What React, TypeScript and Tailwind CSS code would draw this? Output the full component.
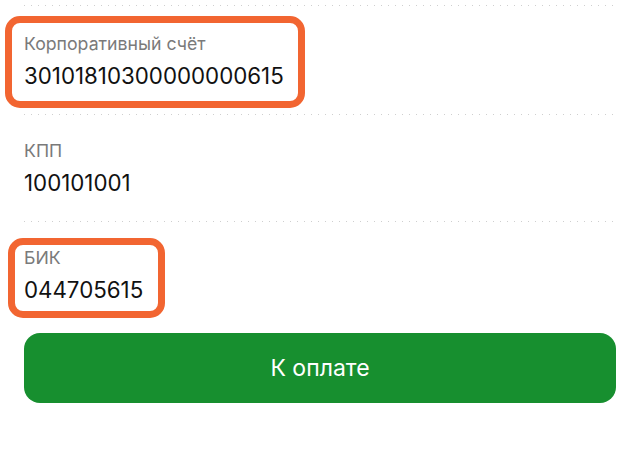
import React from "react";

type FieldProps = {
  label: string;
  value: string;
  top?: string;
  mark?: string;
};

const font = { fontFamily: "Inter, 'Noto Sans', sans-serif" };

function Dots() {
  return (
    <div className="h-px w-[589px] bg-[linear-gradient(to_right,#cfcfcf_1px,transparent_1px)] bg-[length:7px_1px]" />
  );
}

function Field({ label, value, top = "pt-6", mark }: FieldProps) {
  return (
    <div className={`relative flex flex-col pb-6 ${top}`}>
      {mark && (
        <div
          className={`pointer-events-none absolute rounded-[15px] border-[7px] border-[#f26531] ${mark}`}
        />
      )}
      <div className="text-[17.7px] leading-6 text-[#7a7a7a]">{label}</div>
      <div className="mt-1.5 text-[22.3px] leading-7 text-[#111111]">{value}</div>
    </div>
  );
}

export default function App() {
  return (
    <div
      className="flex h-[465px] w-[640px] flex-col overflow-hidden bg-white px-6 pt-[5px]"
      style={font}
    >
      <Dots />
      <Field
        label="Корпоративный счёт"
        value="30101810300000000615"
        top="pt-[26px]"
        mark="-left-[19px] top-[10px] h-[92px] w-[300px]"
      />
      <Dots />
      <Field label="КПП" value="100101001" />
      <Dots />
      <Field
        label="БИК"
        value="044705615"
        mark="-left-[16px] top-[16px] h-[80px] w-[157px]"
      />
      <button
        type="button"
        className="mt-[5px] flex h-[70px] w-full items-center justify-center rounded-2xl bg-[#178f2f] text-[23px] text-white"
      >
        К оплате
      </button>
    </div>
  );
}
